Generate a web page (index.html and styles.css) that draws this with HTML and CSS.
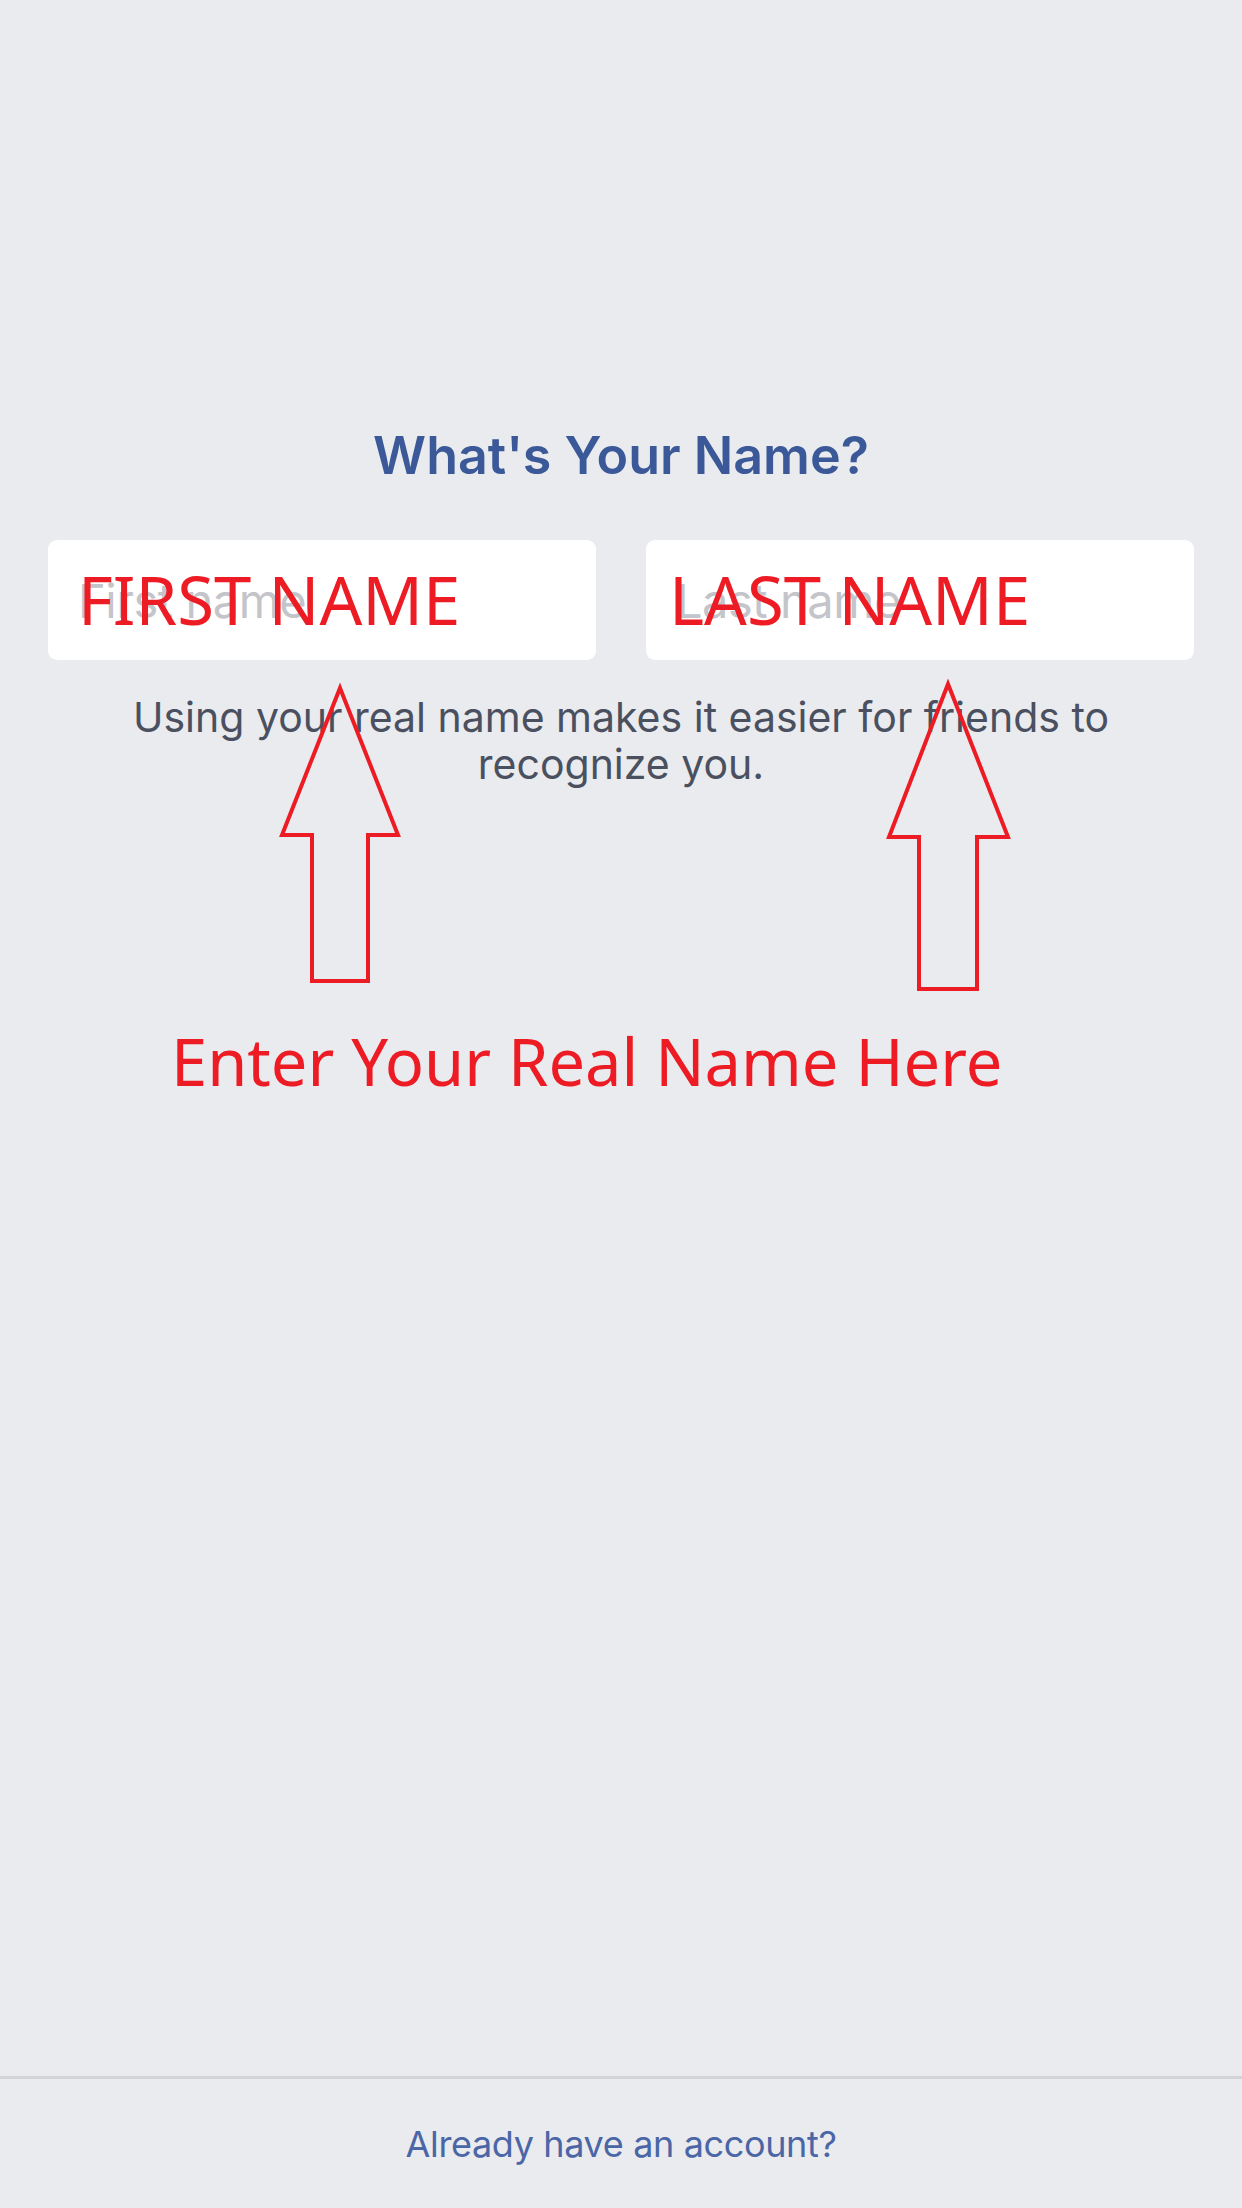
FILE: index.html
```html
<!DOCTYPE html>
<html lang="en">
<head>
<meta charset="utf-8">
<title>What's Your Name?</title>
<link rel="stylesheet" href="styles.css">
</head>
<body>
<div class="screen">
  <main class="content">
    <h1 class="title">What's Your Name?</h1>
    <div class="fields">
      <label class="field">
        <input class="field-input" type="text" placeholder="First name">
        <span class="note note-field note-first">FIRST NAME</span>
      </label>
      <label class="field">
        <input class="field-input" type="text" placeholder="Last name">
        <span class="note note-field note-last">LAST NAME</span>
      </label>
    </div>
    <p class="hint">Using your real name makes it easier for friends to recognize you.</p>
  </main>
  <footer class="footer">
    <a class="footer-link" href="#">Already have an account?</a>
  </footer>

  <svg class="arrows" width="1242" height="2208" viewBox="0 0 1242 2208" aria-hidden="true">
    <polygon class="arrow" points="340,688 398,835 368,835 368,981 312,981 312,835 282,835"/>
    <polygon class="arrow" points="948,684 1008,837 977,837 977,989 919,989 919,837 889,837"/>
  </svg>
  <div class="note note-banner">Enter Your Real Name Here</div>
</div>
</body>
</html>
```

FILE: styles.css
```css
* { box-sizing: border-box; }

html, body {
  margin: 0;
  padding: 0;
  background: #e9ebee;
}

body {
  font-family: Inter, "Liberation Sans", Arial, sans-serif;
}

.screen {
  position: relative;
  width: 1242px;
  height: 2208px;
  display: flex;
  flex-direction: column;
  overflow: hidden;
}

.content {
  flex: 1;
  padding-top: 426px;
}

.title {
  margin: 0;
  text-align: center;
  font-size: 52px;
  line-height: 60px;
  font-weight: 600;
  letter-spacing: 0;
  color: #3b5998;
}

.fields {
  display: flex;
  gap: 50px;
  margin: 54px 48px 0;
}

.field {
  position: relative;
  flex: 1;
  height: 120px;
  background: #ffffff;
  border-radius: 9px;
  display: flex;
  align-items: center;
}

.field-input {
  width: 100%;
  height: 100%;
  border: 0;
  outline: 0;
  background: transparent;
  padding: 0 0 0 30px;
  font-family: Inter, "Liberation Sans", Arial, sans-serif;
  font-size: 47px;
  letter-spacing: -0.01em;
  color: #1d2129;
}

.field-input::placeholder {
  color: #c4c5ca;
}

.hint {
  margin: 34px 100px 0;
  text-align: center;
  font-size: 41px;
  line-height: 47px;
  color: #4b5060;
}

.footer {
  height: 132px;
  border-top: 3px solid #d3d4d8;
  display: flex;
  align-items: center;
  justify-content: center;
}

.footer-link {
  font-size: 36px;
  letter-spacing: -0.01em;
  color: #4b66a6;
  text-decoration: none;
}

/* red annotation overlay */
.note {
  font-family: "Noto Sans", "Open Sans", sans-serif;
  color: #ed1c24;
  white-space: nowrap;
  pointer-events: none;
}

.note-field {
  position: absolute;
  top: 50%;
  transform: translateY(-50%);
  margin-top: -1px;
  font-size: 67px;
  line-height: 1;
}

.note-first { left: 30px; }
.note-last { left: 23px; }

.note-banner {
  position: absolute;
  left: 171px;
  top: 1021px;
  font-size: 65px;
  line-height: 80px;
}

.arrows {
  position: absolute;
  top: 0;
  left: 0;
  pointer-events: none;
}

.arrow {
  fill: none;
  stroke: #ed1c24;
  stroke-width: 4;
  stroke-linejoin: miter;
}
```
